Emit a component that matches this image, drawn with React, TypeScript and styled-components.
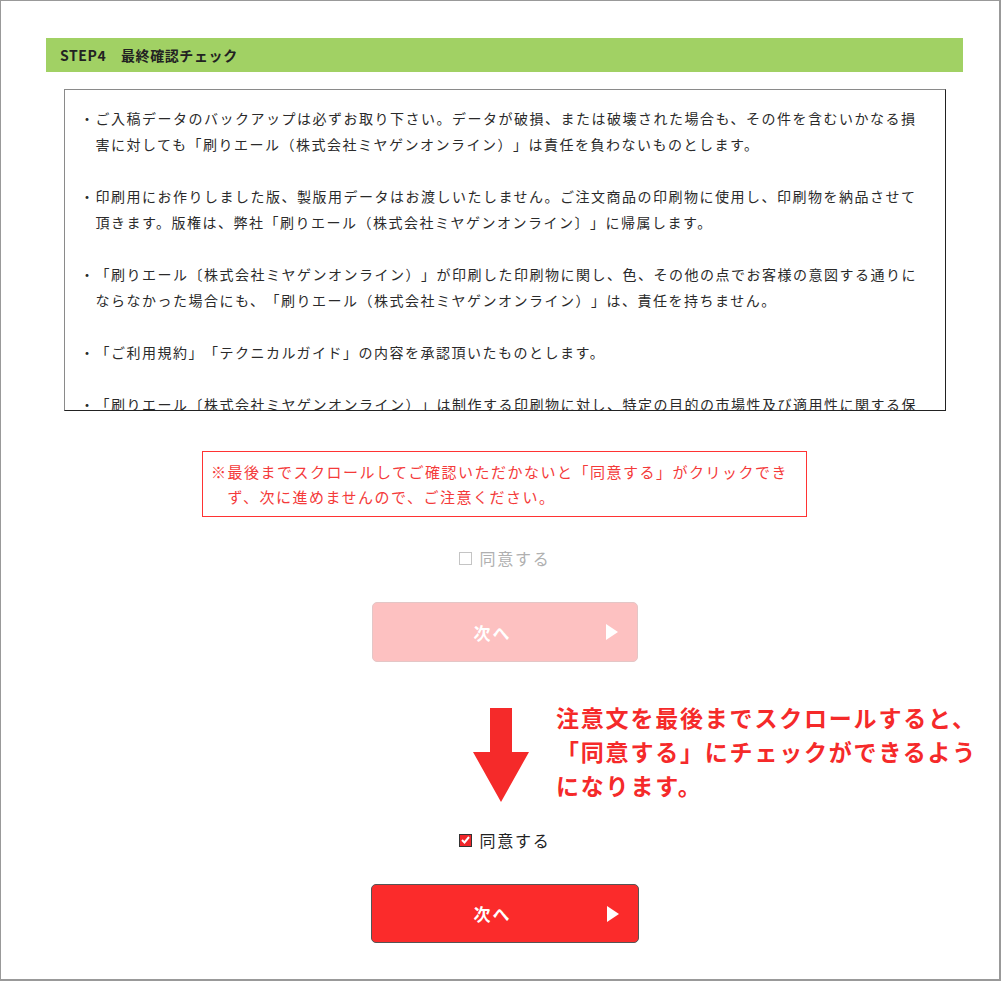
import React from 'react';
import styled, { createGlobalStyle } from 'styled-components';

const GlobalStyle = createGlobalStyle`
  html, body {
    margin: 0;
    padding: 0;
    background: #fff;
  }
  body {
    font-family: "Noto Sans CJK JP", "Noto Sans", sans-serif;
    color: #222;
    text-spacing-trim: space-all;
  }
`;

const Frame = styled.div`
  box-sizing: border-box;
  width: 1001px;
  height: 981px;
  border: 1px solid #999;
  border-right-width: 2px;
  border-bottom-width: 2px;
  padding-top: 37px;
  overflow: hidden;
`;

const Container = styled.div`
  width: 917px;
  margin-left: 45px;
  display: flex;
  flex-direction: column;
`;

const StepHeader = styled.h2`
  margin: 0;
  height: 34px;
  display: flex;
  align-items: center;
  padding-left: 14px;
  background: #a1d164;
  font-size: 14px;
  font-weight: 700;
  letter-spacing: 0.6px;
  color: #222;
`;

const ScrollBox = styled.div`
  box-sizing: border-box;
  margin: 17px 0 0 18px;
  width: 882px;
  height: 322px;
  padding: 15px 18px 0 15px;
  border: 1px solid #8a8a8a;
  border-right-color: #222;
  border-bottom-color: #222;
  overflow-y: auto;
  scrollbar-width: none;
  &::-webkit-scrollbar {
    display: none;
  }
`;

const Clause = styled.p`
  margin: 0 0 26px;
  padding-left: 15.5px;
  text-indent: -15.5px;
  font-size: 14px;
  line-height: 26px;
  letter-spacing: 1.5px;
  color: #2a2a2a;
`;

const Notice = styled.div`
  box-sizing: border-box;
  align-self: center;
  margin-top: 40px;
  width: 605px;
  height: 66px;
  padding: 7px 8px 0 8px;
  border: 1px solid #f33;
`;

const NoticeText = styled.p`
  margin: 0;
  padding-left: 16.5px;
  text-indent: -16.5px;
  font-size: 15px;
  line-height: 25px;
  letter-spacing: 1.5px;
  color: #f43a3a;
`;

const AgreeRow = styled.label<{ $top: number; $enabled?: boolean }>`
  align-self: center;
  margin-top: ${(p) => p.$top}px;
  height: 24px;
  display: flex;
  align-items: center;
  gap: 8px;
  font-size: 16px;
  letter-spacing: 1.7px;
  color: ${(p) => (p.$enabled ? '#222' : '#b0b0b0')};
`;

const Box = styled.span<{ $checked?: boolean }>`
  box-sizing: border-box;
  width: 13px;
  height: 13px;
  display: flex;
  align-items: center;
  justify-content: center;
  border: 1px solid ${(p) => (p.$checked ? '#333' : '#c4c4c4')};
  background: ${(p) => (p.$checked ? '#f0262a' : '#fff')};
`;

const NextButton = styled.button<{ $enabled?: boolean; $top: number; $width: number; $height: number }>`
  box-sizing: border-box;
  align-self: center;
  margin-top: ${(p) => p.$top}px;
  width: ${(p) => p.$width}px;
  height: ${(p) => p.$height}px;
  padding: 0 19px 0 7px;
  display: grid;
  grid-template-columns: 1fr 12px;
  align-items: center;
  border-radius: 5px;
  border: 1px solid ${(p) => (p.$enabled ? '#555' : '#e4c6c6')};
  background: ${(p) => (p.$enabled ? '#fb2b2b' : '#fdc1c1')};
  color: #fff;
  font-family: inherit;
  font-size: 17px;
  font-weight: 700;
  letter-spacing: 2px;
  cursor: ${(p) => (p.$enabled ? 'pointer' : 'default')};
`;

const ButtonLabel = styled.span`
  text-align: center;
`;

const Annotation = styled.div`
  margin-top: 38px;
  display: grid;
  grid-template-columns: 400px 56px minmax(0, 1fr);
  column-gap: 27px;
  align-items: start;
`;

const ArrowWrap = styled.div`
  grid-column: 2;
  padding-top: 8px;
  display: flex;
  justify-content: center;
`;

const AnnotationText = styled.p`
  grid-column: 3;
  margin: 0;
  white-space: nowrap;
  font-size: 23px;
  font-weight: 700;
  line-height: 34px;
  letter-spacing: 1.8px;
  color: #f52a2a;
  text-spacing-trim: normal;
`;

const Triangle = () => (
  <svg width="12" height="16" viewBox="0 0 12 16">
    <polygon points="0,0 12,8 0,16" fill="#fff" />
  </svg>
);

const clauses = [
  '・ご入稿データのバックアップは必ずお取り下さい。データが破損、または破壊された場合も、その件を含むいかなる損害に対しても「刷りエール（株式会社ミヤゲンオンライン）」は責任を負わないものとします。',
  '・印刷用にお作りしました版、製版用データはお渡しいたしません。ご注文商品の印刷物に使用し、印刷物を納品させて頂きます。版権は、弊社「刷りエール（株式会社ミヤゲンオンライン〕」に帰属します。',
  '・「刷りエール〔株式会社ミヤゲンオンライン）」が印刷した印刷物に関し、色、その他の点でお客様の意図する通りにならなかった場合にも、「刷りエール（株式会社ミヤゲンオンライン）」は、責任を持ちません。',
  '・「ご利用規約」「テクニカルガイド」の内容を承認頂いたものとします。',
  '・「刷りエール〔株式会社ミヤゲンオンライン）」は制作する印刷物に対し、特定の目的の市場性及び適用性に関する保証を含め、明示的にも黙示的にも一切の保証を行わないものとします。',
  '・お客様のご都合によるキャンセル、返品はお受けできません。',
];

export default function App() {
  return (
    <>
      <GlobalStyle />
      <Frame>
        <Container>
          <StepHeader>STEP4　最終確認チェック</StepHeader>
          <ScrollBox>
            {clauses.map((c) => (
              <Clause key={c}>{c}</Clause>
            ))}
          </ScrollBox>
          <Notice>
            <NoticeText>
              ※最後までスクロールしてご確認いただかないと「同意する」がクリックできず、次に進めませんので、ご注意ください。
            </NoticeText>
          </Notice>
          <AgreeRow $top={29}>
            <Box />
            同意する
          </AgreeRow>
          <NextButton $top={32} $width={266} $height={60} disabled>
            <ButtonLabel>次へ</ButtonLabel>
            <Triangle />
          </NextButton>
          <Annotation>
            <ArrowWrap>
              <svg width="56" height="94" viewBox="0 0 56 94">
                <polygon points="17,0 39,0 39,44 56,44 28,94 0,44 17,44" fill="#f52a2a" />
              </svg>
            </ArrowWrap>
            <AnnotationText>
              注意文を最後までスクロールすると、
              <br />
              「同意する」にチェックができるよう
              <br />
              になります。
            </AnnotationText>
          </Annotation>
          <AgreeRow $top={26} $enabled>
            <Box $checked>
              <svg width="9" height="8" viewBox="0 0 9 8">
                <polyline points="1,4 3.5,6.5 8,1" fill="none" stroke="#fff" strokeWidth="2" />
              </svg>
            </Box>
            同意する
          </AgreeRow>
          <NextButton $top={32} $width={268} $height={59} $enabled>
            <ButtonLabel>次へ</ButtonLabel>
            <Triangle />
          </NextButton>
        </Container>
      </Frame>
    </>
  );
}
